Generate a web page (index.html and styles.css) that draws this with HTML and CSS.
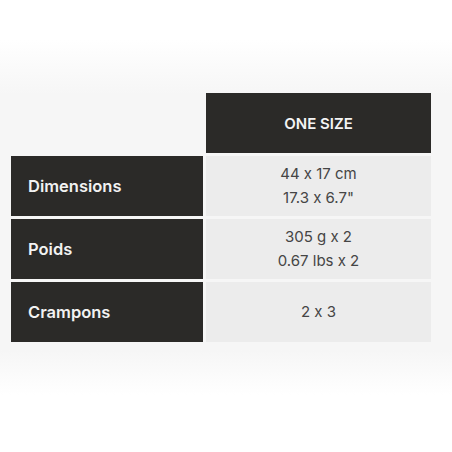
FILE: index.html
```html
<!DOCTYPE html>
<html lang="fr">
<head>
<meta charset="utf-8">
<link rel="stylesheet" href="styles.css">
</head>
<body>
<div class="page">
  <div class="table">
    <div class="cell empty"></div>
    <div class="cell head">ONE SIZE</div>
    <div class="cell label">Dimensions</div>
    <div class="cell value"><span>44 x 17 cm</span><span>17.3 x 6.7"</span></div>
    <div class="cell label">Poids</div>
    <div class="cell value"><span>305 g x 2</span><span>0.67 lbs x 2</span></div>
    <div class="cell label">Crampons</div>
    <div class="cell value"><span>2 x 3</span></div>
  </div>
</div>
</body>
</html>
```
FILE: styles.css
```css
html, body {
  margin: 0;
  padding: 0;
}
body {
  width: 452px;
  height: 452px;
  background: linear-gradient(to bottom, #ffffff 0px, #ffffff 40px, #f6f6f6 95px, #f6f6f6 350px, #ffffff 395px, #ffffff 452px);
  font-family: "Inter", "Liberation Sans", sans-serif;
  font-feature-settings: "calt" 0;
}
.page {
  padding: 93px 21px 0 11px;
}
.table {
  display: grid;
  grid-template-columns: 192px 225px;
  grid-auto-rows: 60px;
  gap: 3px;
}
.cell {
  display: flex;
  align-items: center;
}
.empty {
  background: transparent;
}
.head {
  background: #2b2a28;
  color: #f4f4f4;
  justify-content: center;
  font-weight: 600;
  font-size: 15px;
}
.label {
  background: #2b2a28;
  color: #f2f2f2;
  font-weight: 600;
  font-size: 16.5px;
  padding-left: 17px;
}
.value {
  background: #ececec;
  color: #454545;
  flex-direction: column;
  justify-content: center;
  font-size: 15px;
  line-height: 24px;
}
```
